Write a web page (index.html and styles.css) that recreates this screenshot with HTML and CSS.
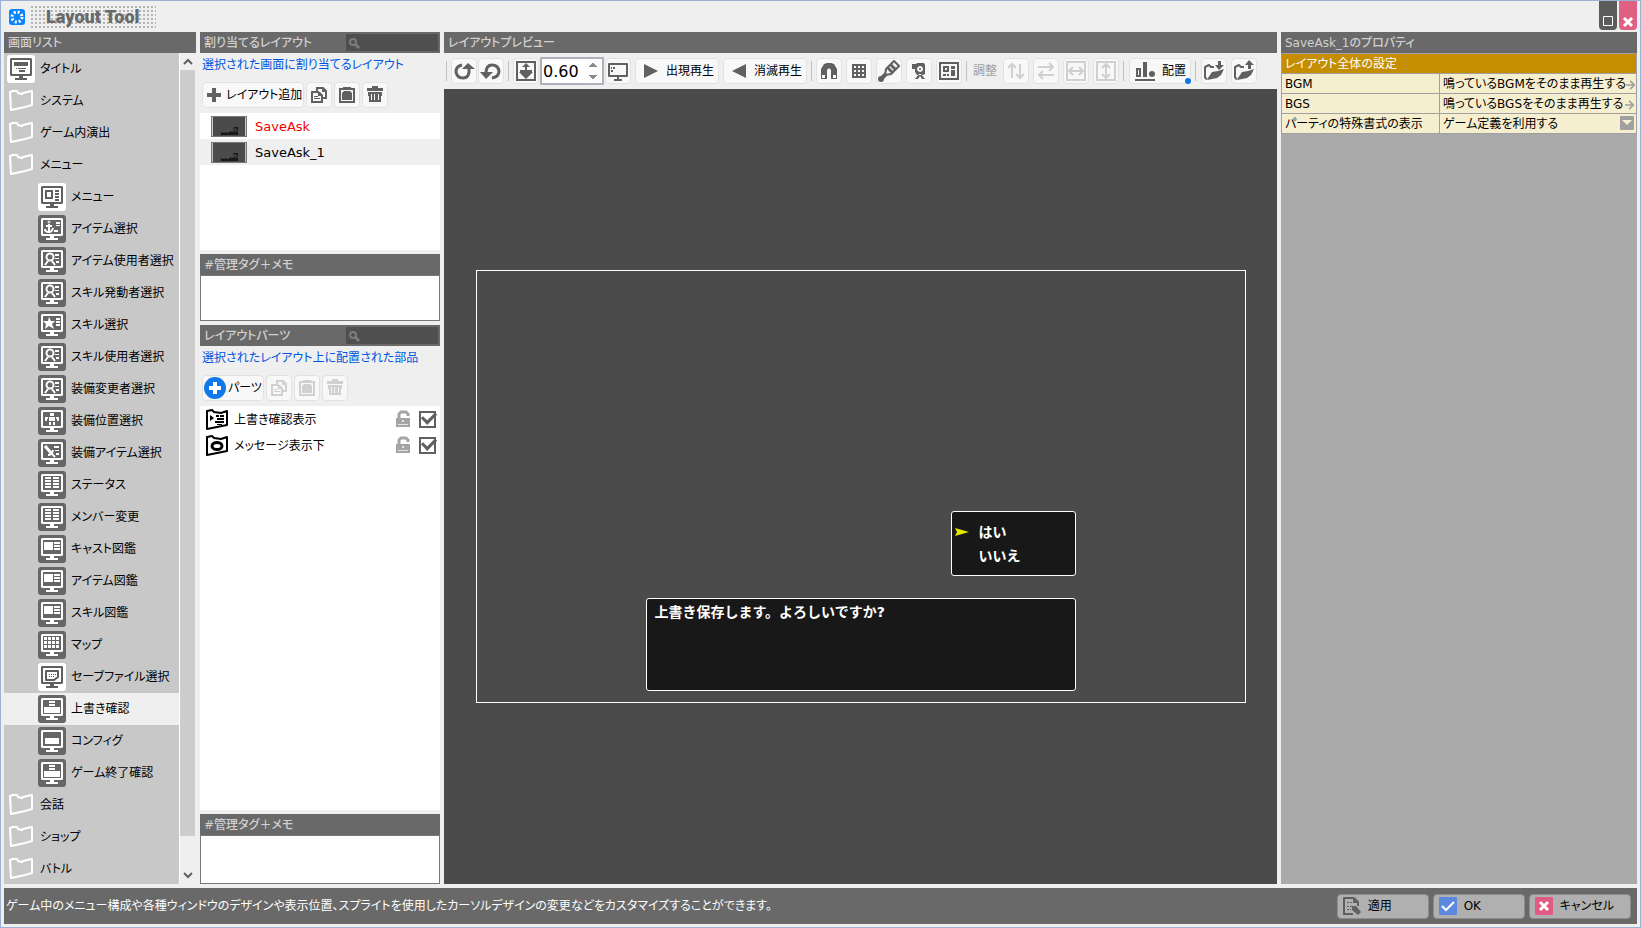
FILE: index.html
```
<!DOCTYPE html>
<html lang="ja">
<head>
    <meta charset="UTF-8">
    <meta name="viewport" content="width=device-width, initial-scale=1.0">
    <title>Layout Tool</title>
    <link rel="stylesheet" href="styles.css">
</head>
<body>
    <!-- Shared icon shapes -->
    <svg class="defs" aria-hidden="true">
        <symbol id="monitor" viewBox="0 0 28 28">
            <path fill-rule="evenodd" fill="currentColor" d="M4 3h20l1 1v16l-1 1h-8v2h4v2H8v-2h4v-2H4l-1-1V4zM5 5v14h18V5z"/>
        </symbol>
        <symbol id="folder" viewBox="0 0 28 28">
            <path fill="none" stroke="#fff" stroke-width="2" stroke-linejoin="round" d="M3 5l3-1h4l1 2 4 1 1-1 4-1 5-1v14l-7 2-9 2-5 1z"/>
        </symbol>
        <symbol id="s-title" viewBox="0 0 28 28">
            <path fill="currentColor" d="M7 7h14v4H7zM11 13h8v1h-8zM9 13h1v1H9zM12 15h6v2h-6z"/>
        </symbol>
        <symbol id="s-menu" viewBox="0 0 28 28">
            <path fill-rule="evenodd" fill="currentColor" d="M7 7h8v9H7zM9 9v5h4V9zM17 7h4v2h-4zM17 10h4v2h-4zM17 13h4v2h-4zM17 16h4v2h-4z"/>
        </symbol>
        <symbol id="s-item" viewBox="0 0 28 28">
            <path fill="none" stroke="currentColor" stroke-width="2" d="M11 9v8M8 11h6M7 14q0 3 4 3 3 0 4-4M16 16h4"/>
            <circle cx="11" cy="7" r="1" fill="none" stroke="currentColor"/>
            <path fill="currentColor" d="M18 7h4v2h-4zM18 10h4v1h-4z"/>
        </symbol>
        <symbol id="s-user" viewBox="0 0 28 28">
            <circle cx="12" cy="10" r="3.5" fill="none" stroke="currentColor" stroke-width="2"/>
            <path fill="none" stroke="currentColor" stroke-width="2" d="M7 18l3-4M17 18l-3-4"/>
            <path fill="currentColor" d="M17 7h4v2h-4zM17 11h4v1h-4zM18 14h3v2h-3z"/>
        </symbol>
        <symbol id="s-star" viewBox="0 0 28 28">
            <path fill="currentColor" d="M11 6l2 4h4l-3 3 2 5-5-3-4 3 1-5-3-3h5zM18 7h4v2h-4zM18 10h4v2h-4zM18 13h4v2h-4z"/>
        </symbol>
        <symbol id="s-body" viewBox="0 0 28 28">
            <path fill="currentColor" d="M12 6h4v3h-4zM11 10h6v4h-6zM7 10h3v2H9v2H7zM18 10h3v4h-2v-2h-1zM11 15h2v3h-2zM15 15h2v3h-2z"/>
        </symbol>
        <symbol id="s-sword" viewBox="0 0 28 28">
            <path fill="none" stroke="currentColor" stroke-width="3" d="M7 7l7 8"/>
            <path fill="none" stroke="currentColor" stroke-width="2" d="M10 16q4 0 5-5M14 15l3 3"/>
            <path fill="currentColor" d="M16 7h5v2h-5zM17 11h4v1h-4zM18 14h3v2h-3z"/>
        </symbol>
        <symbol id="s-status" viewBox="0 0 28 28">
            <path fill="currentColor" d="M7 6h6v2H7zM15 6h6v2h-6zM7 9h6v2H7zM15 9h6v2h-6zM7 12h6v2H7zM15 12h6v2h-6zM7 15h6v2H7zM15 15h6v2h-6z"/>
        </symbol>
        <symbol id="s-book" viewBox="0 0 28 28">
            <path fill="currentColor" d="M6 7h9v8H6zM16 7h6v2h-6zM16 10h6v2h-6zM16 13h6v2h-6z"/>
        </symbol>
        <symbol id="s-map" viewBox="0 0 28 28">
            <path fill="none" stroke="currentColor" stroke-width="3" stroke-dasharray="3 1" d="M6 7.500h16M6 11.500h16M6 15.500h16"/>
        </symbol>
        <symbol id="s-save" viewBox="0 0 28 28">
            <path fill="none" stroke="currentColor" stroke-width="2" stroke-linejoin="round" d="M8 8h12v6l-4 3H8z"/>
            <path stroke="currentColor" stroke-dasharray="1 1" d="M11 11.500h7M11 13.500h5"/>
        </symbol>
        <symbol id="s-ask" viewBox="0 0 28 28">
            <path fill="currentColor" d="M11 6h6v2h-6zM11 9h6v2h-6zM6 12h16v6H6z"/>
        </symbol>
        <symbol id="s-config" viewBox="0 0 28 28">
            <path fill="currentColor" d="M7 11h14v6H7z"/>
        </symbol>
        <symbol id="i-copy" viewBox="0 0 20 20">
            <path fill="none" stroke="currentColor" stroke-width="2" d="M3 7h6l4 4v6H3zM8 6V3h6l3 3v7h-3"/>
            <path fill="none" stroke="currentColor" d="M5 11.500h4M5 13.500h6"/>
            <path fill="currentColor" d="M9 7h2l3 3v1H9zM13 3l4 4h-4z"/>
        </symbol>
        <symbol id="i-paste" viewBox="0 0 20 20">
            <path fill="none" stroke="currentColor" stroke-width="2" d="M3 4h14v13H3z"/>
            <path fill="currentColor" d="M6 2h8v2H6zM5 8l2-2h6l2 2v7H5z"/>
        </symbol>
        <symbol id="i-trash" viewBox="0 0 20 20">
            <path fill="currentColor" d="M7 1h6v2h5v3H2V3h5zM3 7h14v4h-1v6H4v-6H3z"/>
            <path stroke="#f8f8f8" d="M6.500 9v6M9.500 9v6M13.500 9v6"/>
        </symbol>
        <symbol id="i-search" viewBox="0 0 12 12">
            <circle cx="5" cy="5" r="3" fill="none" stroke="#7c7c7c" stroke-width="2"/>
            <path stroke="#7c7c7c" stroke-width="3" d="M7 7l4 4"/>
        </symbol>
        <symbol id="i-lock" viewBox="0 0 16 18">
            <path fill="none" stroke="#a5a5a5" stroke-width="3" d="M4 9V4l2-2h5l2 2v2"/>
            <path fill="#a5a5a5" d="M1 8h14v9H1z"/>
            <path fill="#e4e4e4" d="M7 10h2v2H7zM3 14h10v1H3z"/>
        </symbol>
        <symbol id="i-redo" viewBox="0 0 22 22">
            <path fill="none" stroke="currentColor" stroke-width="3" d="M9 5q-6 1-6 7 1 6 7 6 7 0 6-10"/>
            <path fill="currentColor" d="M9 9l6-6 7 6h-5z"/>
        </symbol>
        <symbol id="i-open" viewBox="0 0 22 22">
            <path fill="none" stroke="currentColor" stroke-width="2" stroke-linejoin="round" d="M2 18V7l4-2 2 2h3M2 18l2 1"/>
            <path fill="currentColor" d="M5 18l4-6 6-1 6-2-3 6-4 3-10 2z"/>
        </symbol>
        <symbol id="i-arrow" viewBox="0 0 12 12">
            <path fill="none" stroke="#a0a0a0" stroke-width="2" d="M0 6h10M5 1l5 5-5 5"/>
        </symbol>
    </svg>

    <div class="window">
        <header class="titlebar">
            <svg class="app-icon" viewBox="0 0 16 16">
                <rect width="16" height="16" rx="3" fill="#0a84ff"/>
                <circle cx="8" cy="8" r="5" fill="none" stroke="#fff" stroke-width="3" stroke-dasharray="2 1.930"/>
            </svg>
            <h1>Layout Tool</h1>
            <div class="window-buttons">
                <button class="win-btn" aria-label="最大化">
                    <svg viewBox="0 0 18 29"><path fill="none" stroke="#fff" d="M4.500 15.500h9v9h-9z"/></svg>
                </button>
                <button class="win-btn win-close" aria-label="閉じる">
                    <svg viewBox="0 0 18 29"><path stroke="#fff" stroke-width="3" d="M5 17l8 8M13 17l-8 8"/></svg>
                </button>
            </div>
        </header>

        <main class="panels">
            <section class="panel screens">
                <h2>画面リスト</h2>
                <div class="screens-body">
                    <ul class="tree">
                        <li><span class="tile light"><svg><use href="#monitor"/></svg><svg><use href="#s-title"/></svg></span>タイトル</li>
                        <li><span class="tile"><svg><use href="#folder"/></svg></span>システム</li>
                        <li><span class="tile"><svg><use href="#folder"/></svg></span>ゲーム内演出</li>
                        <li><span class="tile"><svg><use href="#folder"/></svg></span>メニュー</li>
                        <li class="child"><span class="tile light"><svg><use href="#monitor"/></svg><svg><use href="#s-menu"/></svg></span>メニュー</li>
                        <li class="child"><span class="tile dark"><svg><use href="#monitor"/></svg><svg><use href="#s-item"/></svg></span>アイテム選択</li>
                        <li class="child"><span class="tile dark"><svg><use href="#monitor"/></svg><svg><use href="#s-user"/></svg></span>アイテム使用者選択</li>
                        <li class="child"><span class="tile dark"><svg><use href="#monitor"/></svg><svg><use href="#s-user"/></svg></span>スキル発動者選択</li>
                        <li class="child"><span class="tile dark"><svg><use href="#monitor"/></svg><svg><use href="#s-star"/></svg></span>スキル選択</li>
                        <li class="child"><span class="tile dark"><svg><use href="#monitor"/></svg><svg><use href="#s-user"/></svg></span>スキル使用者選択</li>
                        <li class="child"><span class="tile dark"><svg><use href="#monitor"/></svg><svg><use href="#s-user"/></svg></span>装備変更者選択</li>
                        <li class="child"><span class="tile dark"><svg><use href="#monitor"/></svg><svg><use href="#s-body"/></svg></span>装備位置選択</li>
                        <li class="child"><span class="tile dark"><svg><use href="#monitor"/></svg><svg><use href="#s-sword"/></svg></span>装備アイテム選択</li>
                        <li class="child"><span class="tile dark"><svg><use href="#monitor"/></svg><svg><use href="#s-status"/></svg></span>ステータス</li>
                        <li class="child"><span class="tile dark"><svg><use href="#monitor"/></svg><svg><use href="#s-status"/></svg></span>メンバー変更</li>
                        <li class="child"><span class="tile dark"><svg><use href="#monitor"/></svg><svg><use href="#s-book"/></svg></span>キャスト図鑑</li>
                        <li class="child"><span class="tile dark"><svg><use href="#monitor"/></svg><svg><use href="#s-book"/></svg></span>アイテム図鑑</li>
                        <li class="child"><span class="tile dark"><svg><use href="#monitor"/></svg><svg><use href="#s-book"/></svg></span>スキル図鑑</li>
                        <li class="child"><span class="tile dark"><svg><use href="#monitor"/></svg><svg><use href="#s-map"/></svg></span>マップ</li>
                        <li class="child"><span class="tile light"><svg><use href="#monitor"/></svg><svg><use href="#s-save"/></svg></span>セーブファイル選択</li>
                        <li class="child selected"><span class="tile dark"><svg><use href="#monitor"/></svg><svg><use href="#s-ask"/></svg></span>上書き確認</li>
                        <li class="child"><span class="tile dark"><svg><use href="#monitor"/></svg><svg><use href="#s-config"/></svg></span>コンフィグ</li>
                        <li class="child"><span class="tile dark"><svg><use href="#monitor"/></svg><svg><use href="#s-ask"/></svg></span>ゲーム終了確認</li>
                        <li><span class="tile"><svg><use href="#folder"/></svg></span>会話</li>
                        <li><span class="tile"><svg><use href="#folder"/></svg></span>ショップ</li>
                        <li><span class="tile"><svg><use href="#folder"/></svg></span>バトル</li>
                    </ul>
                    <div class="scrollbar">
                        <button aria-label="上へ"><svg viewBox="0 0 15 17"><path fill="none" stroke="#606060" stroke-width="2" d="M4 11l4-4 4 4"/></svg></button>
                        <div class="thumb"></div>
                        <button class="down" aria-label="下へ"><svg viewBox="0 0 15 17"><path fill="none" stroke="#606060" stroke-width="2" d="M4 6l4 4 4-4"/></svg></button>
                    </div>
                </div>
            </section>

            <div class="middle">
                <section class="panel layouts">
                    <div class="panel-head">
                        <h2>割り当てるレイアウト</h2>
                        <label class="search"><svg><use href="#i-search"/></svg><input type="text" aria-label="レイアウト検索"></label>
                    </div>
                    <p class="hint">選択された画面に割り当てるレイアウト</p>
                    <div class="tools">
                        <button class="btn wide">
                            <svg viewBox="0 0 20 20"><path stroke="currentColor" stroke-width="4" d="M3 10h14M10 3v14"/></svg>レイアウト追加
                        </button>
                        <button class="btn" aria-label="コピー"><svg><use href="#i-copy"/></svg></button>
                        <button class="btn" aria-label="貼り付け"><svg><use href="#i-paste"/></svg></button>
                        <button class="btn" aria-label="削除"><svg><use href="#i-trash"/></svg></button>
                    </div>
                    <ul class="layout-list">
                        <li class="assigned">
                            <svg class="thumbnail" viewBox="0 0 36 21"><rect width="36" height="21" fill="#4b4b4b"/><path fill="#181818" d="M9 16h19v4H9zM23 11h5v4h-5z"/><path stroke="#888" stroke-dasharray="2 1" d="M10 16.500h9M24 13.500h3"/></svg>
                            <span>SaveAsk</span>
                        </li>
                        <li class="current">
                            <svg class="thumbnail" viewBox="0 0 36 21"><rect width="36" height="21" fill="#4b4b4b"/><path fill="#181818" d="M9 16h19v4H9zM23 11h5v4h-5z"/><path stroke="#888" stroke-dasharray="2 1" d="M10 16.500h9M24 13.500h3"/></svg>
                            <span>SaveAsk_1</span>
                        </li>
                    </ul>
                </section>

                <section class="panel memo">
                    <h2><label for="layout-memo">#管理タグ＋メモ</label></h2>
                    <textarea id="layout-memo"></textarea>
                </section>

                <section class="panel parts">
                    <div class="panel-head">
                        <h2>レイアウトパーツ</h2>
                        <label class="search"><svg><use href="#i-search"/></svg><input type="text" aria-label="パーツ検索"></label>
                    </div>
                    <p class="hint">選択されたレイアウト上に配置された部品</p>
                    <div class="tools">
                        <button class="btn add-part">
                            <svg viewBox="0 0 22 22"><circle cx="11" cy="11" r="11" fill="#1078e8"/><path stroke="#fff" stroke-width="4" d="M5 11h12M11 5v12"/></svg>パーツ
                        </button>
                        <button class="btn" disabled aria-label="コピー"><svg><use href="#i-copy"/></svg></button>
                        <button class="btn" disabled aria-label="貼り付け"><svg><use href="#i-paste"/></svg></button>
                        <button class="btn" disabled aria-label="削除"><svg><use href="#i-trash"/></svg></button>
                    </div>
                    <ul class="part-list">
                        <li>
                            <svg class="part-icon" viewBox="0 0 22 21"><path fill="none" stroke="#000" stroke-width="2" stroke-linejoin="round" d="M1 4V2l5-1 2 2 7 1 6-2v14l-10 2-10 2z"/><path fill="#000" d="M4 6l4 3-4 3zM10 6h3v2h-3zM11 9h7v2h-7zM9 12h9v2H9zM11 15h5v1h-5zM14 6h4v2h-4z"/></svg>
                            <label for="part-choice">上書き確認表示</label>
                            <svg class="lock"><use href="#i-lock"/></svg>
                            <input type="checkbox" id="part-choice" checked>
                        </li>
                        <li>
                            <svg class="part-icon" viewBox="0 0 22 21"><path fill="none" stroke="#000" stroke-width="2" stroke-linejoin="round" d="M1 4V2l5-1 2 2 7 1 6-2v14l-10 2-10 2z"/><ellipse cx="11" cy="11" rx="5" ry="3.500" fill="none" stroke="#000" stroke-width="3"/></svg>
                            <label for="part-message">メッセージ表示下</label>
                            <svg class="lock"><use href="#i-lock"/></svg>
                            <input type="checkbox" id="part-message" checked>
                        </li>
                    </ul>
                </section>

                <section class="panel memo part-memo">
                    <h2><label for="part-memo">#管理タグ＋メモ</label></h2>
                    <textarea id="part-memo"></textarea>
                </section>
            </div>

            <section class="panel preview">
                <h2>レイアウトプレビュー</h2>
                <div class="toolbar">
                    <span class="sep"></span>
                    <div class="group">
                        <button class="btn" aria-label="やり直す"><svg><use href="#i-redo"/></svg></button>
                        <button class="btn" aria-label="元に戻す"><svg viewBox="0 0 22 22"><path fill="none" stroke="currentColor" stroke-width="3" d="M12 18q7-1 7-7-1-6-7-6-6 0-6 8"/><path fill="currentColor" d="M0 12l13 0-7 7z"/></svg></button>
                    </div>
                    <span class="sep"></span>
                    <div class="group">
                        <button class="btn" aria-label="全体表示"><svg viewBox="0 0 22 22"><path fill="none" stroke="currentColor" stroke-width="2" d="M2 2h18v18H2z"/><path fill="currentColor" d="M11 3l4 4h-3v3h5v2h1l-7 7-7-7h1v-2h5V7H7z"/></svg></button>
                        <input class="zoom" type="number" aria-label="表示倍率" value="0.60" step="0.01">
                        <button class="btn" aria-label="画面表示"><svg viewBox="0 0 22 22"><path fill="none" stroke="currentColor" stroke-width="2" stroke-linejoin="round" d="M2 4h18v12H2z"/><path fill="currentColor" d="M10 16h2v3h3v2H7v-2h3zM4 7h1v2H4zM6 7h2v2H6zM4 10h2v2H4z"/></svg></button>
                    </div>
                    <button class="btn play"><svg viewBox="0 0 22 22"><path fill="currentColor" d="M4 4l14 7-14 7z"/></svg>出現再生</button>
                    <button class="btn play"><svg viewBox="0 0 22 22"><path fill="currentColor" d="M18 4L4 11l14 7z"/></svg>消滅再生</button>
                    <span class="sep"></span>
                    <button class="btn" aria-label="スナップ"><svg viewBox="0 0 22 22"><path fill="currentColor" d="M3 19V9l3-5 3-1h4l3 1 3 5v10h-6v-9l-2-2-2 2v9zM4 15v3h3v-3zM15 15v3h3v-3z" fill-rule="evenodd"/></svg></button>
                    <button class="btn" aria-label="グリッド"><svg viewBox="0 0 22 22"><path fill="none" stroke="currentColor" stroke-width="2" d="M5 5h12v12H5zM9 5v12M13 5v12M5 9h12M5 13h12"/></svg></button>
                    <button class="btn" aria-label="スポイト"><svg viewBox="0 0 22 22"><path fill="none" stroke="currentColor" stroke-width="2" d="M8 9l8-8 5 5-8 8-6 1z"/><path stroke="currentColor" stroke-width="3" d="M10 8l5 5M13 5l5 5"/><path stroke="currentColor" stroke-width="4" d="M8 14l-5 5"/><circle cx="3" cy="19" r="3" fill="currentColor"/></svg></button>
                    <button class="btn" aria-label="カメラ"><svg viewBox="0 0 22 22"><path fill-rule="evenodd" fill="currentColor" d="M4 4h4l1-1h7l1 2v9l-2 1H9l-2-3V9H4zM12 6a3 3 0 1 0 .1 0zM11 14h2l4 5h-3l-2-3-2 3H7z"/><circle cx="12" cy="9" r="1" fill="currentColor"/></svg></button>
                    <button class="btn" aria-label="パーツ一覧"><svg viewBox="0 0 22 22"><path fill="none" stroke="currentColor" stroke-width="2" d="M2 3h18v16H2z"/><path fill-rule="evenodd" fill="currentColor" d="M5 6h6v6H5zM7 8v2h2V8zM5 14h3v2H5zM9 14h2v2H9zM13 6h4v3h-4zM13 10h4v6h-4z"/></svg></button>
                    <span class="sep"></span>
                    <span class="tool-label">調整</span>
                    <button class="btn" disabled aria-label="縦入れ替え"><svg viewBox="0 0 22 22"><path fill="none" stroke="currentColor" stroke-width="2" d="M7 18V4M3 8l4-4 4 4M15 4v14M11 14l4 4 4-4"/></svg></button>
                    <button class="btn" disabled aria-label="横入れ替え"><svg viewBox="0 0 22 22"><path fill="none" stroke="currentColor" stroke-width="2" d="M3 7h15M14 3l4 4-4 4M19 15H4M8 11l-4 4 4 4"/></svg></button>
                    <button class="btn" disabled aria-label="幅を揃える"><svg viewBox="0 0 22 22"><path fill="none" stroke="currentColor" stroke-width="2" d="M2 2h18v18H2zM5 11h12M8 7l-4 4 4 4M14 7l4 4-4 4"/></svg></button>
                    <button class="btn" disabled aria-label="高さを揃える"><svg viewBox="0 0 22 22"><path fill="none" stroke="currentColor" stroke-width="2" d="M2 2h18v18H2zM11 5v12M7 8l4-4 4 4M7 14l4 4 4-4"/></svg></button>
                    <span class="sep"></span>
                    <button class="btn arrange"><svg viewBox="0 0 22 22"><path fill="currentColor" d="M1 19h20v2H1zM9 2h4v15H9z"/><path fill="none" stroke="currentColor" stroke-width="2" d="M3 9h3v7H3z"/><circle cx="18" cy="14" r="3" fill="currentColor"/></svg>配置</button>
                    <span class="sep"></span>
                    <button class="btn" aria-label="読み込み"><svg viewBox="0 0 22 22"><use href="#i-open"/><path fill="currentColor" d="M15 1h3v4h3l-5 5-4-5h3z"/></svg></button>
                    <button class="btn" aria-label="書き出し"><svg viewBox="0 0 22 22"><use href="#i-open"/><path fill="currentColor" d="M15 9h3V5h3l-5-5-4 5h3z"/></svg></button>
                </div>
                <div class="canvas">
                    <div class="stage">
                        <ul class="choice">
                            <li><svg viewBox="0 0 14 9"><path fill="#e8e800" d="M0 0l14 4L0 8l2-4z"/></svg>はい</li>
                            <li>いいえ</li>
                        </ul>
                        <div class="message">上書き保存します。よろしいですか?</div>
                    </div>
                </div>
            </section>

            <section class="panel properties">
                <h2>SaveAsk_1のプロパティ</h2>
                <table>
                    <colgroup>
                        <col class="name-col">
                        <col>
                    </colgroup>
                    <thead>
                        <tr><th colspan="2">レイアウト全体の設定</th></tr>
                    </thead>
                    <tbody>
                        <tr>
                            <td>BGM</td>
                            <td><button class="value">鳴っているBGMをそのまま再生する<svg><use href="#i-arrow"/></svg></button></td>
                        </tr>
                        <tr>
                            <td>BGS</td>
                            <td><button class="value">鳴っているBGSをそのまま再生する<svg><use href="#i-arrow"/></svg></button></td>
                        </tr>
                        <tr>
                            <td><label for="party-format">パーティの特殊書式の表示</label></td>
                            <td class="select-cell">
                                <select id="party-format"><option>ゲーム定義を利用する</option></select>
                                <svg viewBox="0 0 14 14"><rect width="14" height="14" rx="1" fill="#a0a0a0"/><path fill="#f5eecf" d="M2 4h10l-5 5z"/></svg>
                            </td>
                        </tr>
                    </tbody>
                </table>
            </section>
        </main>

        <footer class="statusbar">
            <p>ゲーム中のメニュー構成や各種ウィンドウのデザインや表示位置、スプライトを使用したカーソルデザインの変更などをカスタマイズすることができます。</p>
            <button class="action"><svg viewBox="0 0 18 18"><path fill="none" stroke="#606060" stroke-width="2" d="M10 17H1V1h10l4 4v4M11 1v4h4"/><path stroke="#606060" stroke-dasharray="2 1" d="M4 5.500h5M4 9.500h6M4 12.500h4"/><path fill="#606060" d="M9 9h4l5 6-3 3-6-5z"/></svg>適用</button>
            <button class="action"><svg viewBox="0 0 18 18"><rect width="18" height="18" rx="1" fill="#5c88e0"/><path fill="none" stroke="#fff" stroke-width="2" d="M3 9l4 4 8-8"/></svg>OK</button>
            <button class="action"><svg viewBox="0 0 18 18"><rect width="18" height="18" rx="1" fill="#e05c84"/><path stroke="#fff" stroke-width="3" d="M5 5l8 8M13 5l-8 8"/></svg>キャンセル</button>
        </footer>
    </div>
</body>
</html>
```

FILE: styles.css
```
* {
    box-sizing: border-box;
}
body {
    margin: 0;
    font-family: "DejaVu Sans", "Noto Sans CJK JP", sans-serif;
    font-size: 12px;
    line-height: 20px;
    font-feature-settings: "palt";
    color: #000;
    background: #efefef;
}
h1, h2, p, ul {
    margin: 0;
    padding: 0;
}
ul {
    list-style: none;
}
button, input, select, textarea {
    font: inherit;
    font-feature-settings: inherit;
    color: inherit;
    margin: 0;
    border: none;
    border-radius: 0;
}
button {
    padding: 0;
    background: none;
    white-space: nowrap;
}
svg {
    display: block;
    flex: none;
}
.defs {
    position: absolute;
    width: 0;
    height: 0;
}
.window {
    display: flex;
    flex-direction: column;
    height: 100vh;
    padding: 0 3px 3px;
    border: 1px solid #98b4d2;
}

/* Title bar */
.titlebar {
    display: flex;
    align-items: center;
    height: 31px;
    padding-left: 5px;
}
.app-icon {
    width: 16px;
    height: 16px;
    margin-right: 5px;
}
.titlebar h1 {
    padding: 0 16px;
    font-family: "Liberation Sans Narrow", Roboto, sans-serif;
    font-size: 18px;
    font-weight: 900;
    line-height: 24px;
    color: #696969;
    background: radial-gradient(circle, #b4b4b4 1px, transparent 1px) 0 0 / 4px 4px;
}
.window-buttons {
    display: flex;
    gap: 2px;
    align-self: flex-start;
    margin-left: auto;
}
.win-btn {
    width: 18px;
    height: 29px;
    border-radius: 0 0 4px 4px;
    background: #5c5c5c;
}
.win-close {
    background: #e06084;
}

/* Panels */
.panels {
    display: flex;
    flex: 1;
    gap: 4px;
    min-height: 0;
}
.panel {
    display: flex;
    flex-direction: column;
    min-height: 0;
}
.panel h2 {
    flex: none;
    height: 21px;
    padding-left: 4px;
    font-size: 12px;
    font-weight: 500;
    line-height: 22px;
    color: #d0d0d0;
    background: #696969;
}
.panel-head {
    display: flex;
    align-items: center;
    justify-content: space-between;
    height: 21px;
    padding-right: 2px;
    background: #696969;
}
.search {
    display: flex;
    align-items: center;
    width: 92px;
    height: 17px;
    padding-left: 2px;
    background: #4f4f4f;
}
.search svg {
    width: 12px;
    height: 12px;
}
.search input {
    width: 100%;
    height: 17px;
    color: #fff;
    background: none;
}

/* Screen tree */
.screens {
    width: 192px;
}
.screens-body {
    display: flex;
    flex: 1;
    min-height: 0;
}
.tree {
    flex: 1;
    overflow: hidden;
    background: #c8c8c8;
    border-right: 1px solid #fff;
}
.tree li {
    display: flex;
    align-items: center;
    gap: 5px;
    height: 32px;
    padding-left: 3px;
    white-space: nowrap;
}
.tree .child {
    padding-left: 34px;
}
.tree .selected {
    background: #efefef;
}
.tile {
    display: grid;
    flex: none;
    width: 28px;
    height: 28px;
    border-radius: 3px;
}
.tile svg {
    grid-area: 1 / 1;
    width: 28px;
    height: 28px;
}
.light {
    color: #606060;
    background: #fff;
}
.dark {
    color: #fff;
    background: #666;
}
.scrollbar {
    display: flex;
    flex-direction: column;
    width: 16px;
}
.scrollbar button {
    height: 17px;
}
.scrollbar svg {
    width: 15px;
    height: 17px;
}
.thumb {
    flex: 1;
    margin-right: 1px;
    background: #cdcdcd;
}
.scrollbar .down {
    margin-top: 31px;
}

/* Layouts and parts */
.middle {
    display: flex;
    flex-direction: column;
    gap: 4px;
    width: 240px;
    min-height: 0;
}
.hint {
    padding-left: 2px;
    line-height: 24px;
    color: #0055e0;
    white-space: nowrap;
}
.tools {
    display: flex;
    gap: 2px;
    padding: 5px 2px;
}
.btn {
    display: flex;
    flex: none;
    align-items: center;
    justify-content: center;
    width: 26px;
    height: 26px;
    border: 1px solid #e2e2e2;
    border-radius: 4px;
    color: #606060;
    background: #f8f8f8;
}
.btn svg {
    width: 22px;
    height: 22px;
}
.btn:disabled {
    color: #d0d0d0;
}
.tools .btn svg {
    width: 20px;
    height: 20px;
}
.wide, .add-part, .play, .arrange {
    width: auto;
    -webkit-text-fill-color: #000;
}
.wide, .add-part {
    gap: 2px;
    padding: 0 1px;
}
.play {
    gap: 4px;
    padding: 0 4px;
}
.arrange {
    gap: 6px;
    padding: 0 4px;
}
.tools .add-part svg {
    width: 22px;
    height: 22px;
}
.layout-list {
    height: 137px;
    background: #fff;
}
.layout-list li {
    display: flex;
    align-items: center;
    gap: 8px;
    height: 26px;
    padding-left: 11px;
    font-size: 13px;
}
.layout-list span, .part-list label {
    padding-top: 2px;
}
.layout-list .assigned {
    color: #f00000;
}
.layout-list .current {
    background: #efefef;
}
.thumbnail {
    width: 36px;
    height: 21px;
    border: 1px solid #777;
}
.memo textarea {
    height: 46px;
    padding: 2px;
    border: 1px solid #777;
    resize: none;
    background: #fff;
}
.part-memo textarea {
    height: 49px;
}
.parts {
    flex: 1;
}
.part-list {
    flex: 1;
    background: #fff;
}
.part-list li {
    display: flex;
    align-items: center;
    gap: 6px;
    height: 26px;
    padding: 0 4px 0 6px;
}
.part-list label {
    flex: 1;
}
.part-icon {
    width: 22px;
    height: 21px;
}
.lock {
    width: 16px;
    height: 18px;
    margin-right: 2px;
}
.part-list input {
    appearance: none;
    width: 17px;
    height: 17px;
    border: 2px solid #606060;
    display: grid;
    place-items: center;
}
.part-list input:checked::after {
    content: "";
    width: 11px;
    height: 6px;
    border: solid #606060;
    border-width: 0 0 3px 3px;
    rotate: -45deg;
    translate: 1px -3px;
}

/* Preview */
.preview {
    flex: 1;
    min-width: 0;
}
.toolbar {
    display: flex;
    flex: none;
    align-items: center;
    gap: 4px;
    height: 36px;
    padding-left: 2px;
}
.group {
    display: flex;
    align-items: center;
    gap: 1px;
}
.sep {
    width: 1px;
    height: 20px;
    background: #c0c0c0;
}
.sep:nth-of-type(n+5) {
    margin-right: 1px;
}
.zoom {
    width: 64px;
    height: 28px;
    padding: 0 1px;
    border: 2px solid #b0b0b8;
    font-size: 16px;
    background: #fff;
}
.zoom::-webkit-inner-spin-button {
    opacity: 1;
    height: 24px;
}
.tool-label {
    padding: 0 2px;
    color: #a0a0a0;
}
.arrange {
    position: relative;
}
.arrange::after {
    content: "";
    position: absolute;
    right: -1px;
    bottom: -1px;
    width: 6px;
    height: 6px;
    border-radius: 3px;
    background: #0a78e0;
}
.canvas {
    display: flex;
    flex: 1;
    align-items: center;
    justify-content: center;
    background: #4b4b4b;
}
.stage {
    position: relative;
    width: 770px;
    height: 433px;
    border: 1px solid #fff;
    font-size: 14px;
    font-weight: 700;
    line-height: 24px;
    color: #fff;
    font-feature-settings: normal;
}
.choice, .message {
    position: absolute;
    right: 169px;
    border: 1px solid #fff;
    border-radius: 3px;
    background: #181818;
}
.choice {
    bottom: 126px;
    width: 125px;
    height: 65px;
    padding: 8px 3px;
}
.choice li {
    display: flex;
    align-items: center;
    padding-left: 24px;
}
.choice svg {
    width: 14px;
    height: 9px;
    margin: 0 10px 0 -24px;
}
.message {
    bottom: 11px;
    width: 430px;
    height: 93px;
    padding: 1px 8px;
}

/* Properties */
.properties {
    width: 356px;
    background: #aaa;
}
.properties table {
    width: 100%;
    table-layout: fixed;
    border-collapse: collapse;
}
.name-col {
    width: 158px;
}
.properties th, .properties td {
    height: 20px;
    padding: 2px 1px 0 3px;
    border: 1px solid #a0a0a0;
    line-height: 17px;
    text-align: left;
    white-space: nowrap;
    background: #f5eecf;
}
.properties th {
    font-weight: 400;
    color: #fff;
    background: #c48e00;
}
.value {
    display: flex;
    align-items: center;
    justify-content: space-between;
    width: 100%;
}
.value svg {
    width: 10px;
    height: 10px;
}
.select-cell {
    position: relative;
}
.select-cell select {
    appearance: none;
    display: block;
    width: 100%;
    height: 17px;
    padding: 0;
    background: none;
}
.select-cell svg {
    position: absolute;
    top: 2px;
    right: 2px;
    width: 14px;
    height: 14px;
    pointer-events: none;
}

/* Status bar */
.statusbar {
    display: flex;
    align-items: center;
    gap: 4px;
    height: 36px;
    margin-top: 4px;
    padding: 0 6px 0 2px;
    background: #696969;
}
.statusbar p {
    flex: 1;
    color: #fff;
    white-space: nowrap;
}
.action {
    display: flex;
    align-items: center;
    gap: 7px;
    min-width: 92px;
    height: 25px;
    padding: 0 16px 0 5px;
    border: 1px solid #8c8c8c;
    border-radius: 4px;
    background: #b0b0b0;
}
.action svg {
    width: 18px;
    height: 18px;
}
```
